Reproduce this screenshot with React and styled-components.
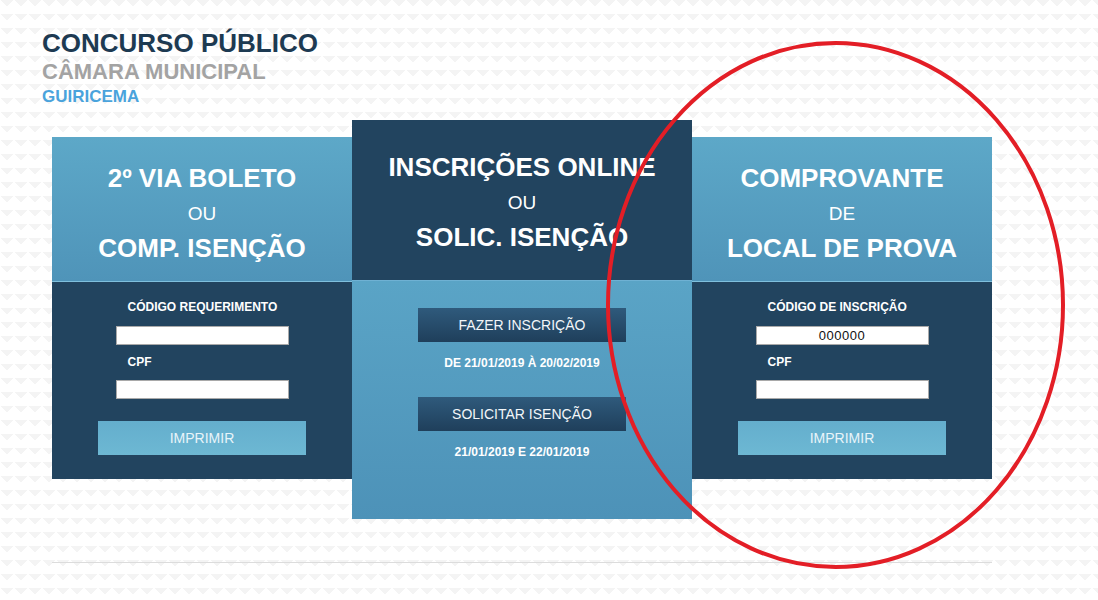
import React from "react";
import styled, { createGlobalStyle } from "styled-components";

const GlobalStyle = createGlobalStyle`
  html, body {
    margin: 0;
    padding: 0;
  }
  body {
    font-family: "Liberation Sans", Arial, sans-serif;
    background-color: #ffffff;
    background-image:
      linear-gradient(135deg, #f4f4f4 22%, transparent 22%),
      linear-gradient(225deg, #f4f4f4 22%, transparent 22%),
      linear-gradient(315deg, #ffffff 22%, transparent 22%),
      linear-gradient(45deg, #ffffff 22%, transparent 22%);
    background-position: -7px 0, -7px 0, 0 0, 0 0;
    background-size: 14px 14px;
  }
`;

const Page = styled.div`
  position: relative;
  width: 1098px;
  height: 600px;
  overflow: hidden;
`;

const Heading = styled.header`
  padding: 28px 0 0 42px;
  display: flex;
  flex-direction: column;
`;

const Title = styled.h1`
  margin: 0;
  font-size: 26px;
  line-height: 30px;
  font-weight: 700;
  color: #1d3a52;
`;

const SubTitle = styled.h2`
  margin: 0;
  font-size: 22px;
  line-height: 28px;
  font-weight: 700;
  color: #a3a3a3;
`;

const City = styled.h3`
  margin: 0;
  font-size: 17px;
  line-height: 22px;
  font-weight: 700;
  color: #4aa3dc;
`;

const Boxes = styled.div`
  display: flex;
  align-items: flex-start;
  margin: 12px 0 0 52px;
  width: 940px;
`;

const Box = styled.section`
  width: ${(p) => (p.$featured ? "340px" : "300px")};
  margin-top: ${(p) => (p.$featured ? "0" : "17px")};
  display: flex;
  flex-direction: column;
`;

const light = "linear-gradient(to bottom, #5da8c8 0%, #4f94b9 100%)";
const dark = "#22445f";

const BoxHead = styled.div`
  height: ${(p) => (p.$featured ? "161px" : "145px")};
  box-sizing: border-box;
  padding-top: ${(p) => (p.$featured ? "30px" : "24px")};
  background: ${(p) => (p.$featured ? dark : light)};
  border-bottom: 1px solid ${(p) => (p.$featured ? "#6fb1d3" : "#7fc0dd")};
  display: flex;
  flex-direction: column;
  align-items: center;
  color: #ffffff;
`;

const HeadLine = styled.div`
  font-size: ${(p) => (p.$small ? "19px" : "26px")};
  font-weight: ${(p) => (p.$small ? 400 : 700)};
  line-height: 35px;
  white-space: nowrap;
`;

const BoxBody = styled.div`
  height: ${(p) => (p.$featured ? "238px" : "197px")};
  box-sizing: border-box;
  background: ${(p) => (p.$featured ? "linear-gradient(to bottom, #5aa4c6 0%, #4d92b8 100%)" : dark)};
  display: flex;
  flex-direction: column;
  align-items: center;
  padding-top: ${(p) => (p.$featured ? "27px" : "17px")};
`;

const Form = styled.div`
  width: 173px;
  display: flex;
  flex-direction: column;
`;

const Label = styled.label`
  display: block;
  padding-left: 12px;
  font-size: 12px;
  line-height: 16px;
  font-weight: 700;
  color: #ffffff;
  white-space: nowrap;
  margin-top: ${(p) => p.$top || "0"};
`;

const Field = styled.input`
  box-sizing: border-box;
  width: 173px;
  height: 19px;
  margin-top: ${(p) => p.$top || "0"};
  border: 1px solid #a9a9a9;
  background: #ffffff;
  padding: 0 4px;
  font-family: "Liberation Sans", Arial, sans-serif;
  font-size: 13px;
  letter-spacing: 0.5px;
  color: #111111;
  text-align: center;
  outline: none;
`;

const PrintButton = styled.button`
  width: 208px;
  height: 34px;
  margin-top: 22px;
  border: none;
  background: linear-gradient(to bottom, #64aecd 0%, #6db8d3 100%);
  color: #e8f4f9;
  font-family: "Liberation Sans", Arial, sans-serif;
  font-size: 14px;
  cursor: pointer;
`;

const ActionButton = styled.button`
  width: 208px;
  height: 34px;
  margin-top: ${(p) => p.$top || "0"};
  border: none;
  background: linear-gradient(to bottom, #2f5a7c 0%, #1f3f5b 100%);
  color: #f2f6f9;
  font-family: "Liberation Sans", Arial, sans-serif;
  font-size: 14px;
  cursor: pointer;
`;

const Period = styled.div`
  margin-top: 13px;
  font-size: 12px;
  line-height: 16px;
  font-weight: 700;
  color: #ffffff;
`;

const Divider = styled.hr`
  margin: 43px 0 0 52px;
  width: 940px;
  border: none;
  border-top: 1px solid #dcdcdc;
`;

const Mark = styled.svg`
  position: absolute;
  left: 0;
  top: 0;
  pointer-events: none;
`;

export default function App() {
  return (
    <>
      <GlobalStyle />
      <Page>
        <Heading>
          <Title>CONCURSO PÚBLICO</Title>
          <SubTitle>CÂMARA MUNICIPAL</SubTitle>
          <City>GUIRICEMA</City>
        </Heading>

        <Boxes>
          <Box>
            <BoxHead>
              <HeadLine>2º VIA BOLETO</HeadLine>
              <HeadLine $small>OU</HeadLine>
              <HeadLine>COMP. ISENÇÃO</HeadLine>
            </BoxHead>
            <BoxBody>
              <Form>
                <Label>CÓDIGO REQUERIMENTO</Label>
                <Field $top="11px" />
                <Label $top="9px">CPF</Label>
                <Field $top="10px" />
              </Form>
              <PrintButton>IMPRIMIR</PrintButton>
            </BoxBody>
          </Box>

          <Box $featured>
            <BoxHead $featured>
              <HeadLine>INSCRIÇÕES ONLINE</HeadLine>
              <HeadLine $small>OU</HeadLine>
              <HeadLine>SOLIC. ISENÇÃO</HeadLine>
            </BoxHead>
            <BoxBody $featured>
              <ActionButton>FAZER INSCRIÇÃO</ActionButton>
              <Period>DE 21/01/2019 À 20/02/2019</Period>
              <ActionButton $top="26px">SOLICITAR ISENÇÃO</ActionButton>
              <Period>21/01/2019 E 22/01/2019</Period>
            </BoxBody>
          </Box>

          <Box>
            <BoxHead>
              <HeadLine>COMPROVANTE</HeadLine>
              <HeadLine $small>DE</HeadLine>
              <HeadLine>LOCAL DE PROVA</HeadLine>
            </BoxHead>
            <BoxBody>
              <Form>
                <Label>CÓDIGO DE INSCRIÇÃO</Label>
                <Field $top="11px" defaultValue="000000" />
                <Label $top="9px">CPF</Label>
                <Field $top="10px" />
              </Form>
              <PrintButton>IMPRIMIR</PrintButton>
            </BoxBody>
          </Box>
        </Boxes>

        <Divider />

        <Mark width="1098" height="600" viewBox="0 0 1098 600">
          <ellipse cx="835.5" cy="305" rx="227.5" ry="262" fill="none" stroke="#e31e26" strokeWidth="4" />
        </Mark>
      </Page>
    </>
  );
}
